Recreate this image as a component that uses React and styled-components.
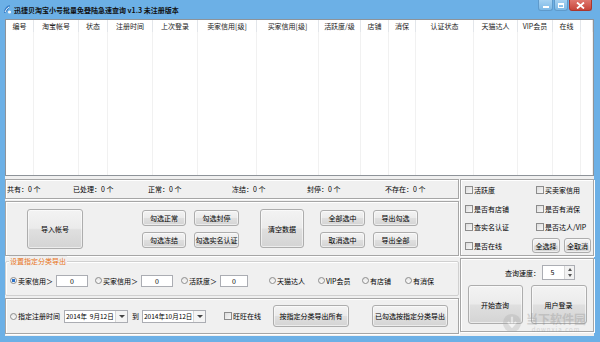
import React from 'react';
import styled, { createGlobalStyle } from 'styled-components';

const GlobalStyle = createGlobalStyle`
  html, body {
    margin: 0;
    padding: 0;
    background: #6cb0e6;
  }
  body {
    font-family: "Noto Sans CJK SC", "DejaVu Sans", sans-serif;
    font-size: 7px;
    color: #000;
  }
  * { box-sizing: border-box; }
`;

const columns = [
  ['编号', 28], ['淘宝帐号', 45], ['状态', 29], ['注册时间', 45], ['上次登录', 45],
  ['卖家信用[级]', 59], ['买家信用[级]', 62], ['活跃度/级', 42], ['店铺', 28], ['消保', 27],
  ['认证状态', 58], ['天猫达人', 44], ['VIP会员', 35], ['在线', 28],
];

const stats = [['共有', 66], ['已处理', 75], ['正常', 84], ['冻结', 75], ['封停', 78], ['不存在', 0]];

const App = () => {
  return (
    <>
      <GlobalStyle />
      <Window>
        <TitleBar>
          <AppIcon width="9" height="11" viewBox="0 0 9 11">
            <path d="M1 9 C1 5 3 2 7 1 C6 3 6 5 4 7 C3 8 2 9 1 9 Z" fill="#2f78c4" />
            <path d="M2 8 C3 6 4 4 6 3" stroke="#fff" strokeWidth="1" fill="none" />
            <circle cx="6.5" cy="8" r="1.6" fill="#f2f6fb" />
          </AppIcon>
          <Title>迅捷贝淘宝小号批量免登陆急速查询 v1.3 未注册版本</Title>
          <Controls>
            <CtrlBtn $w={15}><MinBar /></CtrlBtn>
            <CtrlBtn $w={14}><MaxBox /></CtrlBtn>
            <CtrlBtn $w={23} $close>
              <svg width="9" height="7" viewBox="0 0 9 7">
                <path d="M1 0.5 L8 6.5 M8 0.5 L1 6.5" stroke="#fff" strokeWidth="1.8" />
              </svg>
            </CtrlBtn>
          </Controls>
        </TitleBar>

        <Body>
          <Table>
            {columns.map(([label, w]) => (
              <Column key={label} $w={w}>
                <HeadCell>{label}</HeadCell>
                <ColumnFill />
              </Column>
            ))}
            <Column $fill>
              <HeadCell />
              <ColumnFill />
            </Column>
          </Table>

          <Lower>
            <LeftCol>
              <StatsPanel>
                {stats.map(([label, w]) => (
                  <Stat key={label} $w={w}>{label}：0 个</Stat>
                ))}
              </StatsPanel>

              <ButtonPanel>
                <Btn $w={56} $h={40}>导入帐号</Btn>
                <BtnGrid $ml={59}>
                  <Btn $w={44} $h={16}>勾选正常</Btn>
                  <Btn $w={45} $h={16}>勾选封停</Btn>
                  <Btn $w={44} $h={16}>勾选冻结</Btn>
                  <Btn $w={45} $h={16}>勾选实名认证</Btn>
                </BtnGrid>
                <Btn $w={44} $h={39} style={{ marginLeft: 21 }}>清空数据</Btn>
                <BtnGrid $ml={16}>
                  <Btn $w={45} $h={16}>全部选中</Btn>
                  <Btn $w={45} $h={16}>导出勾选</Btn>
                  <Btn $w={45} $h={16}>取消选中</Btn>
                  <Btn $w={45} $h={16}>导出全部</Btn>
                </BtnGrid>
              </ButtonPanel>

              <GroupBox>
                <Legend>设置指定分类导出</Legend>
                <Option $w={85}><Radio $on />卖家信用＞<NumBox>0</NumBox></Option>
                <Option $w={86}><Radio />买家信用＞<NumBox>0</NumBox></Option>
                <Option $w={88}><Radio />活跃度＞<NumBox $w={28}>0</NumBox></Option>
                <Option $w={49}><Radio />天猫达人</Option>
                <Option $w={44}><Radio />VIP会员</Option>
                <Option $w={43}><Radio />有店铺</Option>
                <Option><Radio />有消保</Option>
              </GroupBox>

              <DatePanel>
                <Option $w={54}><Radio />指定注册时间</Option>
                <DateBox>
                  <DateText>2014年&nbsp;&nbsp;9月12日</DateText>
                  <DropBtn><Caret /></DropBtn>
                </DateBox>
                <ToLabel>到</ToLabel>
                <DateBox>
                  <DateText>2014年10月12日</DateText>
                  <DropBtn><Caret /></DropBtn>
                </DateBox>
                <Option $w={49} style={{ marginLeft: 18 }}><Check />旺旺在线</Option>
                <Btn $w={76} $h={22}>按指定分类导出所有</Btn>
                <Btn $w={76} $h={22} style={{ marginLeft: 23 }}>已勾选按指定分类导出</Btn>
              </DatePanel>
            </LeftCol>

            <RightCol>
              <CheckPanel>
                <Option><Check />活跃度</Option>
                <Option><Check />买卖家信用</Option>
                <Option><Check />是否有店铺</Option>
                <Option><Check />是否有消保</Option>
                <Option><Check />查实名认证</Option>
                <Option><Check />是否达人/VIP</Option>
                <Option><Check />是否在线</Option>
                <SmallBtns>
                  <Btn $w={28} $h={15}>全选择</Btn>
                  <Btn $w={27} $h={15}>全取消</Btn>
                </SmallBtns>
              </CheckPanel>

              <SpeedPanel>
                <SpeedRow>
                  查询速度：
                  <SpinBox>
                    <SpinValue>5</SpinValue>
                    <SpinArrows>
                      <ArrowUp />
                      <ArrowDown />
                    </SpinArrows>
                  </SpinBox>
                </SpeedRow>
                <SpeedButtons>
                  <Btn $w={55} $h={39}>开始查询</Btn>
                  <Btn $w={56} $h={39}>用户登录</Btn>
                </SpeedButtons>
              </SpeedPanel>
            </RightCol>
          </Lower>
        </Body>

        <Watermark>
          <WmLogo>
            <svg width="20" height="20" viewBox="0 0 22 22">
              <circle cx="11" cy="11" r="10" fill="#a8a8a8" />
              <path d="M11 4 V14 M6.5 10 L11 15 L15.5 10" stroke="#fff" strokeWidth="2.4" fill="none" />
            </svg>
          </WmLogo>
          <WmText>
            <WmName>当下软件园</WmName>
            <WmUrl>downxia.com</WmUrl>
          </WmText>
        </Watermark>
      </Window>
    </>
  );
};

// Styled Components
const Window = styled.div`
  position: relative;
  width: 600px;
  height: 342px;
  display: flex;
  flex-direction: column;
  padding: 0 6px 6px 5px;
  background: #6cb0e6;
  overflow: hidden;
`;

const TitleBar = styled.div`
  height: 19px;
  display: flex;
  align-items: center;
  margin: 0 -6px 0 -5px;
  padding-left: 3px;
`;

const AppIcon = styled.svg`
  flex-shrink: 0;
  margin-right: 2px;
`;

const Title = styled.div`
  font-weight: bold;
  font-size: 7px;
  color: #111;
`;

const Controls = styled.div`
  display: flex;
  gap: 1px;
  margin-left: auto;
  margin-right: 8px;
  align-self: flex-start;
`;

const CtrlBtn = styled.div`
  width: ${p => p.$w}px;
  height: 11px;
  display: flex;
  align-items: center;
  justify-content: center;
  border: 1px solid ${p => (p.$close ? '#a9362e' : '#5f9acb')};
  border-top: none;
  border-radius: 0 0 3px 3px;
  background: ${p => (p.$close
    ? 'linear-gradient(#e0776e, #c7453a)'
    : 'linear-gradient(#a6d2f2, #7db9e6)')};
`;

const MinBar = styled.div`
  width: 6px;
  height: 2px;
  margin-top: 4px;
  background: #fff;
`;

const MaxBox = styled.div`
  width: 6px;
  height: 5px;
  border: 1px solid #fff;
  border-top-width: 2px;
`;

const Body = styled.div`
  flex: 1;
  display: flex;
  flex-direction: column;
  background: #f0f0f0;
`;

const Table = styled.div`
  height: 157px;
  display: flex;
  background: #fff;
  border: 1px solid #8e9399;
`;

const Column = styled.div`
  display: flex;
  flex-direction: column;
  width: ${p => (p.$fill ? 'auto' : `${p.$w}px`)};
  flex: ${p => (p.$fill ? '1' : 'none')};
`;

const HeadCell = styled.div`
  height: 12px;
  line-height: 12px;
  text-align: center;
  white-space: nowrap;
  color: #222;
  border-right: 1px solid #e3e6ea;
`;

const ColumnFill = styled.div`
  flex: 1;
  border-right: 1px solid #f1f1f1;
`;

const Lower = styled.div`
  flex: 1;
  display: grid;
  grid-template-columns: 454px 1fr;
  column-gap: 1px;
  padding: 3px 0 2px;
`;

const LeftCol = styled.div`
  display: flex;
  flex-direction: column;
  gap: 2px;
`;

const RightCol = styled.div`
  display: flex;
  flex-direction: column;
  gap: 2px;
`;

const Panel = styled.div`
  border: 1px solid #a6a6a6;
  box-shadow: inset 1px 1px 0 #fff, 1px 1px 0 #fff;
`;

const StatsPanel = styled(Panel)`
  height: 20px;
  display: flex;
  align-items: center;
  padding-left: 1px;
`;

const Stat = styled.div`
  width: ${p => (p.$w ? `${p.$w}px` : 'auto')};
  flex: none;
  white-space: nowrap;
`;

const ButtonPanel = styled(Panel)`
  height: 55px;
  display: flex;
  align-items: center;
  padding-left: 21px;
`;

const BtnGrid = styled.div`
  display: grid;
  grid-template-columns: auto auto;
  column-gap: 8px;
  row-gap: 6px;
  margin-left: ${p => p.$ml}px;
`;

const Btn = styled.button`
  width: ${p => p.$w}px;
  height: ${p => p.$h}px;
  flex: none;
  padding: 0;
  font-family: inherit;
  font-size: 7px;
  color: #000;
  white-space: nowrap;
  border: 1px solid #adadad;
  border-radius: 3px;
  background: linear-gradient(#f3f3f3 0%, #ebebeb 48%, #dfdfdf 52%, #d4d4d4 100%);
  box-shadow: inset 0 0 0 1px rgba(255, 255, 255, 0.55);
`;

const GroupBox = styled.div`
  position: relative;
  height: 35px;
  margin-top: 3px;
  display: flex;
  align-items: center;
  padding: 4px 0 0 4px;
  border: 1px solid #d0d0d0;
  border-radius: 2px;
  box-shadow: inset 1px 1px 0 #fff;
`;

const Legend = styled.div`
  position: absolute;
  top: -6px;
  left: 3px;
  padding: 0 1px;
  background: #f0f0f0;
  color: #e8741a;
  line-height: 11px;
`;

const Option = styled.div`
  width: ${p => (p.$w ? `${p.$w}px` : 'auto')};
  flex: none;
  display: flex;
  align-items: center;
  white-space: nowrap;
`;

const Radio = styled.span`
  width: 7px;
  height: 7px;
  flex: none;
  margin-right: 1px;
  border-radius: 50%;
  border: 1px solid #8c8c8c;
  background: ${p => (p.$on
    ? 'radial-gradient(circle, #2c72c9 0 1.5px, #eef2f7 2px)'
    : 'linear-gradient(#e6e6e6, #fafafa)')};
`;

const Check = styled.span`
  width: 8px;
  height: 8px;
  flex: none;
  margin-right: 1px;
  border: 1px solid #8c8c8c;
  background: linear-gradient(135deg, #dcdcdc, #f8f8f8);
`;

const NumBox = styled.div`
  width: ${p => p.$w || 32}px;
  height: 12px;
  margin-left: 3px;
  line-height: 10px;
  text-align: center;
  background: #fff;
  border: 1px solid #abadb3;
`;

const DatePanel = styled(Panel)`
  height: 36px;
  display: flex;
  align-items: center;
  padding-left: 4px;
`;

const DateBox = styled.div`
  width: 64px;
  height: 13px;
  display: flex;
  background: #fff;
  border: 1px solid #abadb3;
`;

const DateText = styled.div`
  flex: 1;
  padding-left: 1px;
  line-height: 11px;
  font-size: 6.5px;
  white-space: nowrap;
  overflow: hidden;
`;

const DropBtn = styled.div`
  width: 12px;
  display: flex;
  align-items: center;
  justify-content: center;
  border-left: 1px solid #d7d7d7;
  background: #f4f4f4;
`;

const Caret = styled.div`
  width: 0;
  height: 0;
  border-left: 3px solid transparent;
  border-right: 3px solid transparent;
  border-top: 3px solid #444;
`;

const ToLabel = styled.div`
  margin: 0 3px 0 4px;
`;

const CheckPanel = styled(Panel)`
  height: 77px;
  display: grid;
  grid-template-columns: 71px 1fr;
  grid-auto-rows: 18.5px;
  align-items: center;
  padding: 1px 0 0 4px;
`;

const SmallBtns = styled.div`
  display: flex;
  gap: 4px;
  margin-left: -4px;
  align-items: center;
`;

const SpeedPanel = styled(Panel)`
  height: 74px;
  display: flex;
  flex-direction: column;
  align-items: center;
  padding-top: 6px;
`;

const SpeedRow = styled.div`
  display: flex;
  align-items: center;
  margin-left: 26px;
`;

const SpinBox = styled.div`
  width: 33px;
  height: 15px;
  display: flex;
  margin-left: 2px;
  background: #fff;
  border: 1px solid #abadb3;
`;

const SpinValue = styled.div`
  flex: 1;
  line-height: 13px;
  text-align: center;
  padding-right: 2px;
`;

const SpinArrows = styled.div`
  width: 10px;
  display: flex;
  flex-direction: column;
  align-items: center;
  justify-content: space-around;
  border-left: 1px solid #d7d7d7;
  background: #f2f2f2;
`;

const ArrowUp = styled.div`
  border-left: 2.5px solid transparent;
  border-right: 2.5px solid transparent;
  border-bottom: 3px solid #555;
`;

const ArrowDown = styled.div`
  border-left: 2.5px solid transparent;
  border-right: 2.5px solid transparent;
  border-top: 3px solid #555;
`;

const SpeedButtons = styled.div`
  display: flex;
  gap: 8px;
  margin-top: 5px;
`;

const Watermark = styled.div`
  position: absolute;
  right: 14px;
  bottom: 9px;
  display: flex;
  align-items: center;
  gap: 4px;
  opacity: 0.3;
  pointer-events: none;
`;

const WmLogo = styled.div`
  display: flex;
`;

const WmText = styled.div`
  display: flex;
  flex-direction: column;
  align-items: center;
`;

const WmName = styled.div`
  font-size: 12px;
  line-height: 14px;
  font-weight: bold;
  color: #8a8a8a;
`;

const WmUrl = styled.div`
  font-size: 6px;
  line-height: 7px;
  letter-spacing: 1px;
  color: #8a8a8a;
`;

export default App;
